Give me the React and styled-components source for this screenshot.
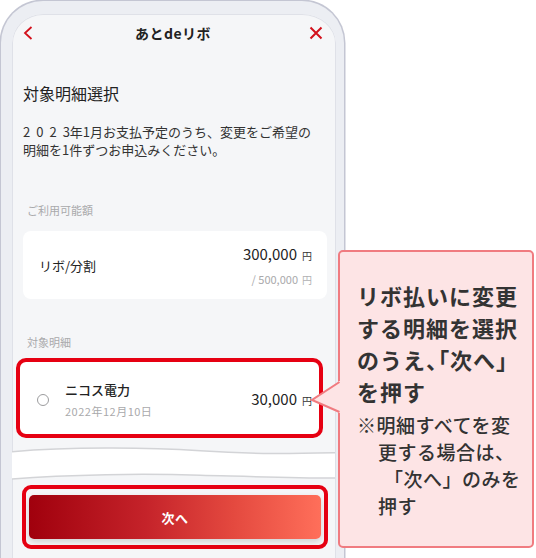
import React from "react";
import styled, { createGlobalStyle } from "styled-components";

const GlobalStyle = createGlobalStyle`
  html, body { margin: 0; padding: 0; background: #fff; }
  body { font-family: "Noto Sans CJK JP", "Noto Sans", sans-serif; color: #222; }
  * { box-sizing: border-box; }
`;

const Page = styled.div`
  position: relative;
  width: 536px;
  height: 558px;
  overflow: hidden;
  background: #fff;
`;

const Phone = styled.div`
  margin: 1px 0 0 1px;
  width: 343px;
  min-height: 620px;
  border-style: solid;
  border-color: #eceef3;
  border-width: 13px 8px 0 11px;
  border-radius: 42px 42px 0 0;
  background: #f5f6f8;
  box-shadow: 0 0 0 1.5px #c4c6d3, inset 0 0 0 1px #dfe1e8;
  display: flex;
  flex-direction: column;
`;

const Header = styled.header`
  height: 38px;
  display: grid;
  grid-template-columns: 1fr auto 1fr;
  align-items: center;
  padding: 0 13px 0 11px;
`;

const HeaderTitle = styled.div`
  font-size: 14px;
  font-weight: 700;
  letter-spacing: 0.5px;
  color: #222;
`;

const IconButton = styled.span`
  display: flex;
  justify-content: ${(p) => (p.$end ? "flex-end" : "flex-start")};
  color: #d3111c;
`;

const Body = styled.main`
  padding: 0 9px 0 11px;
  display: flex;
  flex-direction: column;
`;

const PageTitle = styled.h1`
  margin: 29px 0 0;
  font-size: 16px;
  line-height: 24px;
  font-weight: 400;
  color: #222;
`;

const Lead = styled.p`
  margin: 18px 0 0;
  font-size: 13px;
  line-height: 18px;
  color: #333;
`;

const Wide = styled.span`
  letter-spacing: 6px;
`;

const SectionLabel = styled.div`
  margin-top: ${(p) => p.$top}px;
  padding-left: 4px;
  font-size: 11px;
  line-height: 16px;
  color: #a9a9ab;
`;

const Card = styled.div`
  margin-top: 13px;
  height: 68px;
  background: #fff;
  border-radius: 8px;
  display: flex;
  align-items: center;
  justify-content: space-between;
  padding: 0 15px 0 16px;
`;

const CardLabel = styled.div`
  font-size: 13px;
  color: #222;
`;

const AmountCol = styled.div`
  display: flex;
  flex-direction: column;
  align-items: flex-end;
`;

const Amount = styled.div`
  display: flex;
  align-items: baseline;
  gap: 5px;
  font-size: 15px;
  line-height: 20px;
  color: #222;
`;

const Yen = styled.span`
  font-size: 10px;
  color: ${(p) => (p.$muted ? "#b0b0b2" : "#333")};
`;

const SubAmount = styled.div`
  margin-top: 6px;
  display: flex;
  align-items: baseline;
  gap: 4px;
  font-size: 11px;
  line-height: 14px;
  color: #a9a9ab;
`;

const Highlight = styled.div`
  margin: 8px 0 0 -7px;
  width: 307px;
  height: 80px;
  border: 4px solid #e60012;
  border-radius: 10px;
  background: #fff;
  display: flex;
  align-items: center;
  padding: 4px 7px 0 17px;
`;

const Radio = styled.span`
  width: 12px;
  height: 12px;
  border-radius: 50%;
  border: 1px solid #9c9c9e;
  background: #fff;
  flex: none;
`;

const ItemText = styled.div`
  margin-left: 16px;
  display: flex;
  flex-direction: column;
  gap: 4px;
  flex: 1;
`;

const ItemName = styled.div`
  font-size: 13px;
  line-height: 18px;
  font-weight: 500;
  color: #222;
`;

const ItemDate = styled.div`
  font-size: 11px;
  line-height: 16px;
  letter-spacing: 0.5px;
  color: #a9a9ab;
`;

const Break = styled.div`
  margin: 3px -8px 0 -11px;
  height: 44px;
  display: flex;
`;

const Footer = styled.footer`
  padding-left: 10px;
`;

const ButtonFrame = styled.div`
  width: 306px;
  height: 64px;
  border: 4px solid #e60012;
  border-radius: 9px;
  padding: 6px 3px;
`;

const NextButton = styled.button`
  width: 100%;
  height: 44px;
  border: none;
  border-radius: 5px;
  background: linear-gradient(90deg, #a0000d 0%, #c5232a 40%, #e4493f 70%, #ff6f5a 100%);
  box-shadow: 0 3px 6px rgba(0, 0, 0, 0.15);
  color: #fff;
  font-family: inherit;
  font-size: 13px;
  font-weight: 700;
  letter-spacing: 0.5px;
`;

const Callout = styled.aside`
  position: absolute;
  left: 338px;
  top: 250px;
  width: 196px;
  height: 298px;
  border: 2px solid #f07b80;
  border-radius: 5px;
  background: #fde4e5;
  padding: 27px 8px 0 17px;
  color: #333;
`;

const Pointer = styled.svg`
  position: absolute;
  left: 310px;
  top: 378px;
`;

const CalloutMain = styled.p`
  margin: 0;
  font-size: 22px;
  line-height: 32px;
  font-weight: 700;
  letter-spacing: 1px;
  white-space: nowrap;
`;

const Palt = styled.span`
  font-feature-settings: "palt";
`;

const CalloutNote = styled.p`
  margin: 4px 0 0;
  font-size: 19px;
  line-height: 27px;
  font-weight: 500;
  letter-spacing: 0.5px;
  padding-left: 21px;
  text-indent: -21px;
  white-space: nowrap;
`;

const NoteShift = styled.span`
  padding-left: 6px;
`;

export default function App() {
  return (
    <Page>
      <GlobalStyle />
      <Phone>
        <Header>
          <IconButton>
            <svg width="10" height="14" viewBox="0 0 10 14">
              <path d="M8.5 1 L2 7 L8.5 13" fill="none" stroke="currentColor" strokeWidth="1.8" />
            </svg>
          </IconButton>
          <HeaderTitle>あとdeリボ</HeaderTitle>
          <IconButton $end>
            <svg width="14" height="14" viewBox="0 0 14 14">
              <path d="M1.5 1.5 L12.5 12.5 M12.5 1.5 L1.5 12.5" fill="none" stroke="currentColor" strokeWidth="2" />
            </svg>
          </IconButton>
        </Header>
        <Body>
          <PageTitle>対象明細選択</PageTitle>
          <Lead>
            <Wide>202</Wide>3年1月お支払予定のうち、変更をご希望の
            <br />
            明細を1件ずつお申込みください。
          </Lead>
          <SectionLabel $top={43}>ご利用可能額</SectionLabel>
          <Card>
            <CardLabel>リボ/分割</CardLabel>
            <AmountCol>
              <Amount>
                300,000<Yen>円</Yen>
              </Amount>
              <SubAmount>
                / 500,000<Yen $muted>円</Yen>
              </SubAmount>
            </AmountCol>
          </Card>
          <SectionLabel $top={35}>対象明細</SectionLabel>
          <Highlight>
            <Radio />
            <ItemText>
              <ItemName>ニコス電力</ItemName>
              <ItemDate>2022年12月10日</ItemDate>
            </ItemText>
            <Amount>
              30,000<Yen>円</Yen>
            </Amount>
          </Highlight>
          <Break>
            <svg width="343" height="44" viewBox="0 0 343 44">
              <path
                d="M0 10 C60 5, 140 5, 200 9 C260 13, 300 12, 343 11 L343 38 C290 38, 240 36, 200 35 C140 33, 60 34, 0 39 Z"
                fill="#fff"
              />
              <path d="M0 10 C60 5, 140 5, 200 9 C260 13, 300 12, 343 11" fill="none" stroke="#d3d4d7" strokeWidth="1.6" />
              <path d="M343 38 C290 38, 240 36, 200 35 C140 33, 60 34, 0 39" fill="none" stroke="#d3d4d7" strokeWidth="1.6" />
            </svg>
          </Break>
        </Body>
        <Footer>
          <ButtonFrame>
            <NextButton type="button">次へ</NextButton>
          </ButtonFrame>
        </Footer>
      </Phone>
      <Callout>
        <CalloutMain>
          リボ払いに変更
          <br />
          する明細を選択
          <br />
          のうえ<Palt>、「</Palt>次へ」
          <br />
          を押す
        </CalloutMain>
        <CalloutNote>
          ※明細すべてを変
          <br />
          更する場合は、
          <br />
          <NoteShift>「次へ」のみを</NoteShift>
          <br />
          押す
        </CalloutNote>
      </Callout>
      <Pointer width="34" height="40" viewBox="0 0 34 40">
        <path d="M29 3 L2 22 L29 35 L32 35 L32 3 Z" fill="#fde4e5" />
        <path d="M29.5 4 L2 22 L29.5 34" fill="none" stroke="#f07b80" strokeWidth="2" />
      </Pointer>
    </Page>
  );
}
